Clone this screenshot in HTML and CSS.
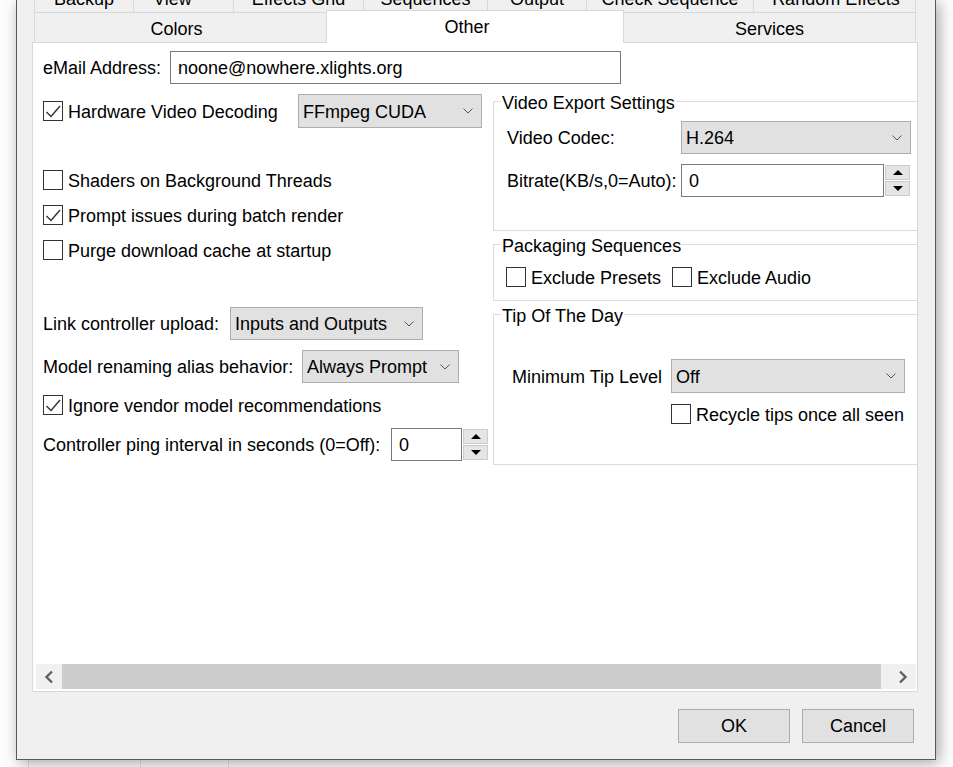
FILE: index.html
```html
<!DOCTYPE html>
<html>
<head>
<meta charset="utf-8">
<title>Preferences</title>
<link rel="stylesheet" href="styles.css">
</head>
<body>
<div class="win">
  <div class="tabs1">
    <div class="t1 c-backup"><span>Backup</span></div>
    <div class="t1 c-view"><span>View</span></div>
    <div class="t1 c-grid"><span>Effects Grid</span></div>
    <div class="t1 c-seq"><span>Sequences</span></div>
    <div class="t1 c-out"><span>Output</span></div>
    <div class="t1 c-check"><span>Check Sequence</span></div>
    <div class="t1 c-random"><span>Random Effects</span></div>
  </div>
  <div class="tabs2">
    <div class="t2 t2-colors">Colors</div>
    <div class="t2 t2-other">Other</div>
    <div class="t2 t2-services">Services</div>
  </div>
  <div class="panel">
    <div class="scrollarea">
      <div class="content">
        <div class="row r-email">
          <span class="lbl w127">eMail Address:</span>
          <div class="input w451">noone@nowhere.xlights.org</div>
        </div>
        <div class="cols">
          <div class="left">
            <div class="row r-hw">
              <div class="chk w255"><span class="cb"><svg width="18" height="18" viewBox="0 0 18 18"><polyline points="2.5,10 7,14.5 16,4" /></svg></span><span class="txt">Hardware Video Decoding</span></div>
              <div class="combo w184"><span class="txt">FFmpeg CUDA</span><svg class="chev" width="10" height="6" viewBox="0 0 10 6"><polyline points="0.5,0.5 5,5 9.5,0.5" /></svg></div>
            </div>
            <div class="chk r-shaders"><span class="cb"></span><span class="txt">Shaders on Background Threads</span></div>
            <div class="chk r-next"><span class="cb"><svg width="18" height="18" viewBox="0 0 18 18"><polyline points="2.5,10 7,14.5 16,4" /></svg></span><span class="txt">Prompt issues during batch render</span></div>
            <div class="chk r-next"><span class="cb"></span><span class="txt">Purge download cache at startup</span></div>
            <div class="row r-link">
              <span class="lbl w187">Link controller upload:</span>
              <div class="combo w193"><span class="txt">Inputs and Outputs</span><svg class="chev" width="10" height="6" viewBox="0 0 10 6"><polyline points="0.5,0.5 5,5 9.5,0.5" /></svg></div>
            </div>
            <div class="row r-model">
              <span class="lbl w259">Model renaming alias behavior:</span>
              <div class="combo w157"><span class="txt">Always Prompt</span><svg class="chev" width="10" height="6" viewBox="0 0 10 6"><polyline points="0.5,0.5 5,5 9.5,0.5" /></svg></div>
            </div>
            <div class="chk r-ignore"><span class="cb"><svg width="18" height="18" viewBox="0 0 18 18"><polyline points="2.5,10 7,14.5 16,4" /></svg></span><span class="txt">Ignore vendor model recommendations</span></div>
            <div class="row r-ping">
              <span class="lbl w348">Controller ping interval in seconds (0=Off):</span>
              <div class="input w71">0</div>
              <div class="spin">
                <div class="sb"><svg width="10" height="5" viewBox="0 0 10 5"><polygon points="0,5 5,0 10,5" /></svg></div>
                <div class="sb"><svg width="10" height="5" viewBox="0 0 10 5"><polygon points="0,0 10,0 5,5" /></svg></div>
              </div>
            </div>
          </div>
          <div class="right">
            <div class="group g-video">
              <div class="gtitle">Video Export Settings</div>
              <div class="row r-codec">
                <span class="lbl w174">Video Codec:</span>
                <div class="combo w230"><span class="txt">H.264</span><svg class="chev" width="10" height="6" viewBox="0 0 10 6"><polyline points="0.5,0.5 5,5 9.5,0.5" /></svg></div>
              </div>
              <div class="row r-bitrate">
                <span class="lbl w174">Bitrate(KB/s,0=Auto):</span>
                <div class="input w203">0</div>
                <div class="spin">
                  <div class="sb"><svg width="10" height="5" viewBox="0 0 10 5"><polygon points="0,5 5,0 10,5" /></svg></div>
                  <div class="sb"><svg width="10" height="5" viewBox="0 0 10 5"><polygon points="0,0 10,0 5,5" /></svg></div>
                </div>
              </div>
            </div>
            <div class="group g-pack">
              <div class="gtitle">Packaging Sequences</div>
              <div class="row r-pack">
                <div class="chk w166"><span class="cb"></span><span class="txt">Exclude Presets</span></div>
                <div class="chk"><span class="cb"></span><span class="txt">Exclude Audio</span></div>
              </div>
            </div>
            <div class="group g-tip">
              <div class="gtitle">Tip Of The Day</div>
              <div class="row r-min">
                <span class="lbl w159">Minimum Tip Level</span>
                <div class="combo w234"><span class="txt">Off</span><svg class="chev" width="10" height="6" viewBox="0 0 10 6"><polyline points="0.5,0.5 5,5 9.5,0.5" /></svg></div>
              </div>
              <div class="chk r-recycle"><span class="cb"></span><span class="txt">Recycle tips once all seen</span></div>
            </div>
          </div>
        </div>
      </div>
    </div>
    <div class="hscroll">
      <div class="sarrow sl"><svg width="10" height="14" viewBox="0 0 10 14"><polyline points="8,1.5 2.5,7 8,12.5" /></svg></div>
      <div class="thumb"></div>
      <div class="track"></div>
      <div class="sarrow sr"><svg width="10" height="14" viewBox="0 0 10 14"><polyline points="2,1.5 7.5,7 2,12.5" /></svg></div>
    </div>
  </div>
  <div class="footer">
    <div class="btn">OK</div>
    <div class="btn">Cancel</div>
  </div>
</div>
<div class="below">
  <div class="bl b1"></div>
  <div class="bl b2"></div>
  <div class="bl b3"></div>
</div>
</body>
</html>
```
FILE: styles.css
```css
* { box-sizing: border-box; }
html, body { margin: 0; padding: 0; }
body {
  width: 953px;
  height: 767px;
  overflow: hidden;
  background: #fdfdfd;
  font-family: "Liberation Sans", Arial, sans-serif;
  font-size: 18px;
  color: #000;
}

/* window */
.win {
  margin-left: 16px;
  width: 920px;
  height: 760px;
  background: #f0f0f0;
  border: 1px solid #5a5a5a;
  border-top: 0;
  box-shadow: 3px 3px 14px rgba(0, 0, 0, 0.35);
  position: relative;
  z-index: 1;
  display: flex;
  flex-direction: column;
}

/* tab rows */
.tabs1 {
  display: flex;
  margin-left: 17px;
  height: 12px;
  overflow: hidden;
}
.t1 {
  height: 12px;
  display: flex;
  align-items: flex-end;
  justify-content: center;
  border-left: 1px solid #d9d9d9;
  background: #f0f0f0;
}
.t1:last-child { border-right: 1px solid #d9d9d9; }
.t1 span {
  display: block;
  line-height: 20px;
  margin-bottom: 3px;
  white-space: nowrap;
}
.c-backup { width: 99px; }
.c-view { width: 100px; padding-right: 22px; }
.c-grid { width: 130px; }
.c-seq { width: 124px; }
.c-out { width: 99px; }
.c-check { width: 167px; }
.c-random { width: 163px; padding-left: 3px; }

.tabs2 {
  display: flex;
  align-items: flex-end;
  margin-left: 17px;
  height: 30px;
}
.t2 {
  height: 30px;
  border: 1px solid #d9d9d9;
  border-bottom: 0;
  background: #f0f0f0;
  display: flex;
  align-items: center;
  justify-content: center;
  padding-top: 3px;
}
.t2-colors { width: 292px; border-right: 0; padding-right: 8px; }
.t2-other {
  width: 298px;
  height: 33px;
  margin-bottom: -1px;
  background: #fff;
  position: relative;
  z-index: 1;
  padding-top: 0;
  padding-right: 16px;
}
.t2-services { width: 292px; border-left: 0; }

/* panel */
.panel {
  margin-left: 15px;
  width: 886px;
  height: 650px;
  border: 1px solid #d9d9d9;
  background: #fff;
  display: flex;
  flex-direction: column;
}
.scrollarea {
  height: 621px;
  overflow: hidden;
  flex: none;
}
.content {
  width: 960px;
  padding: 8px 0 0 10px;
}

.row { display: flex; align-items: center; }
.lbl { flex: none; white-space: nowrap; padding-top: 2px; }
.txt { padding-top: 2px; }
.w127 { width: 127px; }
.w159 { width: 159px; }
.w166 { width: 166px; }
.w174 { width: 174px; }
.w187 { width: 187px; }
.w255 { width: 255px; }
.w259 { width: 259px; }
.w348 { width: 348px; }
.w71 { width: 71px; }
.w157 { width: 157px; }
.w184 { width: 184px; }
.w193 { width: 193px; }
.w203 { width: 203px; }
.w230 { width: 230px; }
.w234 { width: 234px; }
.w451 { width: 451px; }

.input {
  flex: none;
  height: 33px;
  border: 1px solid #7a7a7a;
  background: #fff;
  padding: 2px 0 0 7px;
  display: flex;
  align-items: center;
  white-space: nowrap;
}
.combo {
  flex: none;
  height: 33px;
  border: 1px solid #adadad;
  background: #e1e1e1;
  padding: 0 8px 0 4px;
  display: flex;
  align-items: center;
  justify-content: space-between;
  white-space: nowrap;
}
.chev polyline { fill: none; stroke: #555; stroke-width: 1; }

.spin {
  flex: none;
  width: 25px;
  margin-left: 1px;
  display: flex;
  flex-direction: column;
  gap: 1px;
}
.sb {
  height: 15px;
  border: 1px solid #cccccc;
  background: #e5e5e5;
  display: flex;
  align-items: center;
  justify-content: center;
}
.sb polygon { fill: #000; }

.chk {
  display: flex;
  align-items: center;
  height: 20px;
  white-space: nowrap;
  flex: none;
}
.cb {
  flex: none;
  width: 20px;
  height: 20px;
  border: 1px solid #333;
  background: #fff;
  margin-right: 5px;
  display: flex;
}
.cb polyline { fill: none; stroke: #333; stroke-width: 1.4; }

/* rows of the main area */
.r-email { height: 33px; }
.cols { display: flex; margin-top: 7px; }
.left { width: 450px; flex: none; }
.right { width: 440px; flex: none; }

.r-hw { height: 34px; margin-top: 3px; }
.r-hw .combo { height: 34px; }
.r-shaders { margin-top: 42px; }
.r-next { margin-top: 15px; }
.r-link { margin-top: 47px; }
.r-model { margin-top: 10px; }
.r-ignore { margin-top: 12px; }
.r-ping { margin-top: 13px; }

/* group boxes */
.group {
  border: 1px solid #dcdcdc;
  border-right: 0;
}
.gtitle {
  display: table;
  margin: -11px 0 0 7px;
  padding: 2px 1px 0;
  line-height: 20px;
  background: #fff;
  white-space: nowrap;
}
.g-video { margin-top: 10px; padding-bottom: 33px; }
.r-codec { margin: 8px 0 0 13px; }
.r-bitrate { margin: 10px 0 0 13px; }
.g-pack { margin-top: 13px; padding-bottom: 13px; }
.r-pack { margin: 11px 0 0 12px; }
.g-tip { margin-top: 13px; padding-bottom: 40px; }
.r-min { margin: 33px 0 0 18px; }
.r-min .combo { height: 34px; }
.r-recycle { margin: 11px 0 0 177px; }

/* horizontal scrollbar */
.hscroll {
  flex: none;
  margin-left: 3px;
  width: 880px;
  height: 25px;
  background: #f0f0f0;
  display: flex;
}
.sarrow {
  width: 26px;
  display: flex;
  align-items: center;
  justify-content: center;
}
.sarrow polyline { fill: none; stroke: #606060; stroke-width: 2.4; }
.thumb { width: 819px; background: #cdcdcd; }
.track { flex: 1; }

/* footer buttons */
.footer {
  display: flex;
  justify-content: flex-end;
  gap: 12px;
  margin-top: 17px;
  padding-right: 21px;
}
.btn {
  width: 112px;
  height: 34px;
  background: #e1e1e1;
  border: 1px solid #adadad;
  display: flex;
  align-items: center;
  justify-content: center;
  padding-top: 1px;
}

/* what lies below the window */
.below {
  height: 7px;
  display: flex;
}
.bl { height: 7px; border-left: 1px solid #dfe4ea; }
.b1 { margin-left: 28px; width: 112px; }
.b2 { width: 88px; }
.b3 { width: 100px; }
```
